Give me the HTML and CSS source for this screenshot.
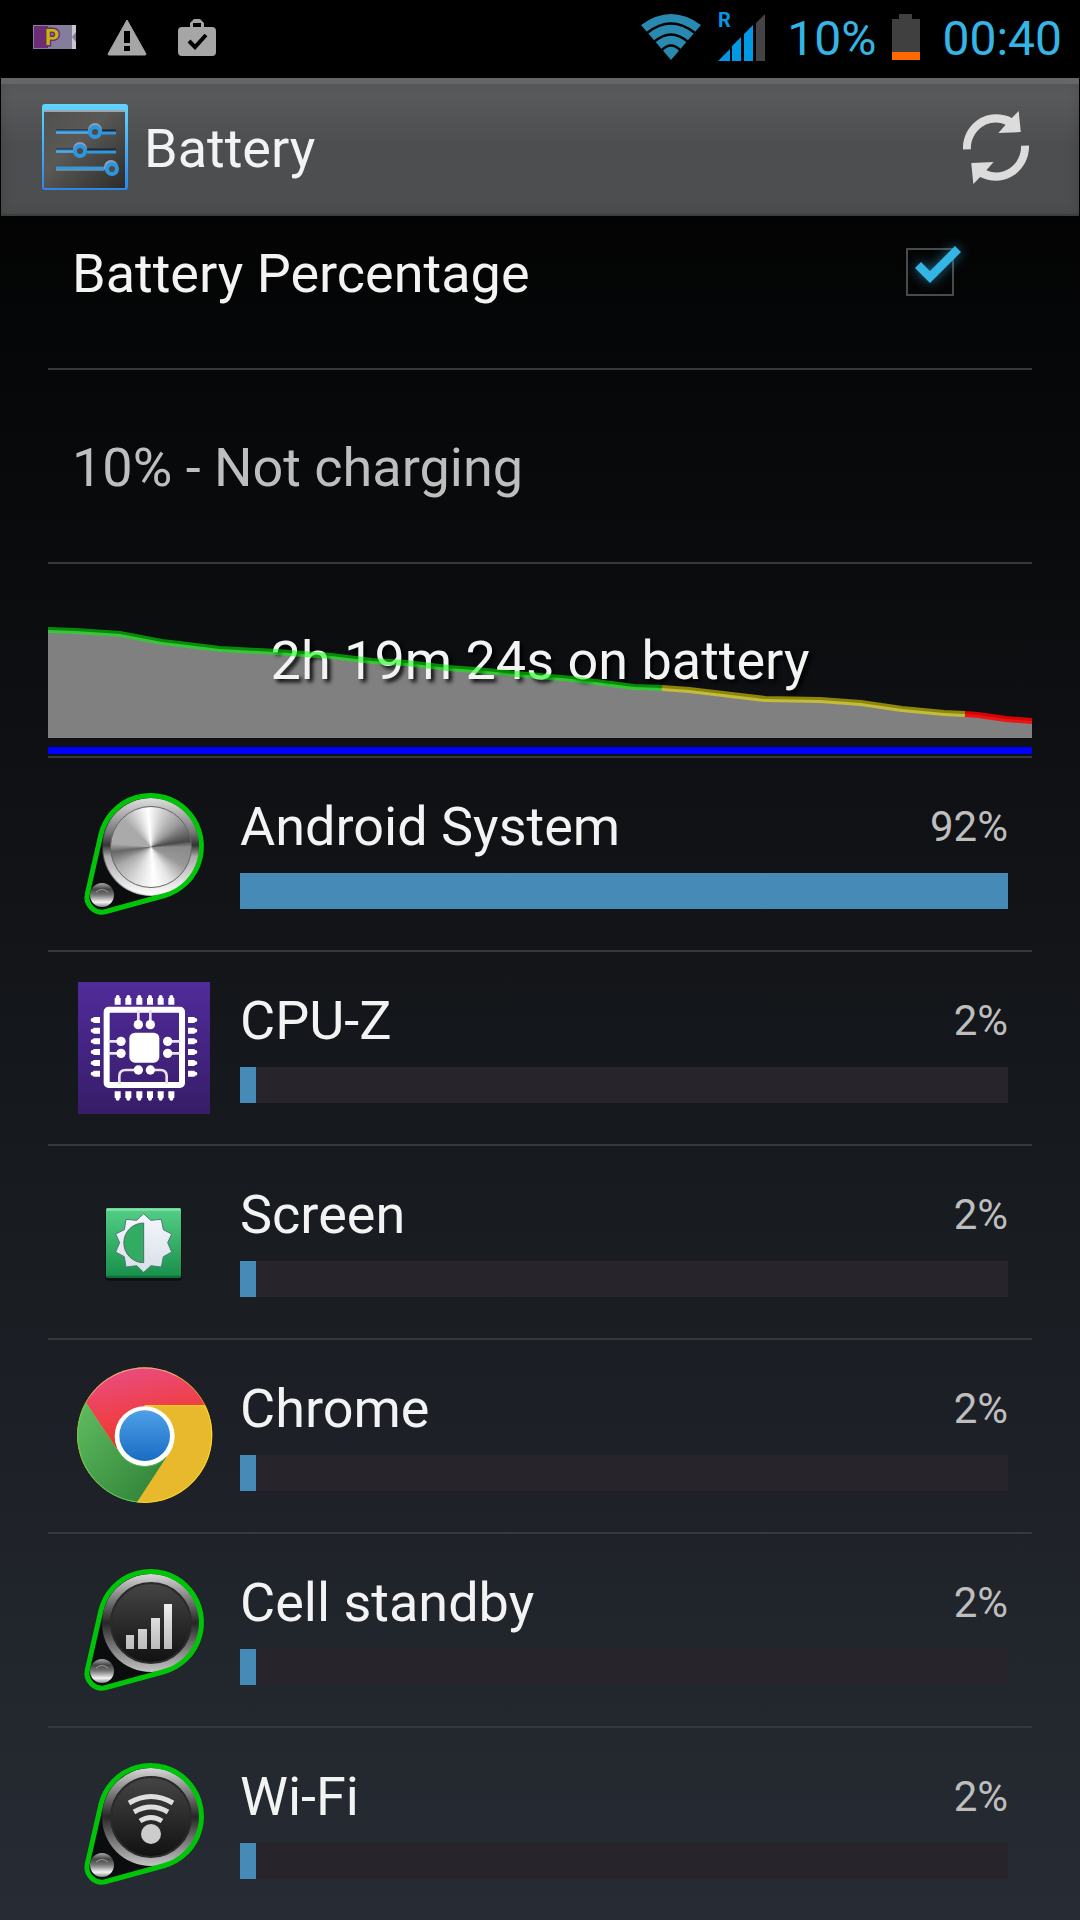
FILE: index.html
```html
<!DOCTYPE html>
<html lang="en">
<head>
    <meta charset="UTF-8">
    <meta name="viewport" content="width=device-width, initial-scale=1.0">
    <title>Battery</title>
    <link rel="stylesheet" href="styles.css">
</head>
<body>
    <!-- shared gradients and the knob body -->
    <svg class="defs" width="0" height="0" aria-hidden="true">
        <defs>
            <linearGradient id="ring" x1="0" y1="0" x2="0" y2="1">
                <stop offset="0" stop-color="#d8d8d8"/>
                <stop offset=".3" stop-color="#6c6c6c"/>
                <stop offset=".5" stop-color="#262626"/>
                <stop offset=".7" stop-color="#6a6a6a"/>
                <stop offset="1" stop-color="#c4c4c4"/>
            </linearGradient>
            <linearGradient id="screw" x1="0" y1="0" x2="0" y2="1">
                <stop offset="0" stop-color="#aaa"/>
                <stop offset=".25" stop-color="#444"/>
                <stop offset=".5" stop-color="#777"/>
                <stop offset=".8" stop-color="#f4f4f4"/>
                <stop offset="1" stop-color="#888"/>
            </linearGradient>
            <linearGradient id="dial" x1="0" y1="0" x2="0" y2="1">
                <stop offset="0" stop-color="#454545"/>
                <stop offset="1" stop-color="#111"/>
            </linearGradient>
            <linearGradient id="glyph" x1="0" y1="0" x2="0" y2="1">
                <stop offset="0" stop-color="#eee"/>
                <stop offset="1" stop-color="#bbb"/>
            </linearGradient>
        </defs>
        <symbol id="knob" viewBox="0 0 144 144">
            <path d="M29 52A51 51 0 1 1 92.500 113.500L34 129.500A15 15 0 0 1 15.400 111.500Z" fill="#0b0c0d"/>
            <circle cx="79" cy="65" r="49" fill="url(#ring)"/>
            <circle cx="30" cy="113" r="12" fill="url(#screw)"/>
            <path d="M24 110q6-5 12 0" fill="none" stroke="#999" stroke-width="1"/>
            <path d="M29 52A51 51 0 1 1 92.500 113.500L34 129.500A15 15 0 0 1 15.400 111.500Z" fill="none" stroke="#00c408" stroke-width="5"/>
        </symbol>
    </svg>

    <div class="statusbar">
        <svg width="43" height="24" viewBox="0 0 43 24">
            <rect width="43" height="24" fill="#847d9b"/>
            <rect x="1" y="1" width="14" height="22" fill="#6c2b75"/>
            <path d="M39 0h4v8l-3 4 3 4v8h-4z" fill="#c9c9c9"/>
            <path d="M43 7l-4 5 4 5z" fill="#847d9b"/>
            <text class="coupon" x="12" y="20">P</text>
        </svg>
        <svg width="40" height="37" viewBox="0 0 40 37">
            <path d="M20 1L39 35q0 1-1 1H2q-1 0-1-1z" fill="#a6a6a6" stroke="#a6a6a6" stroke-linejoin="round"/>
            <path d="M17 12h6v12h-6zM17 27h6v5h-6z" fill="#000"/>
        </svg>
        <svg width="38" height="37" viewBox="0 0 38 37">
            <path d="M4 8h8V4l4-4h6l4 4v4h8q4 0 4 4v21q0 4-4 4H4q-4 0-4-4V12q0-4 4-4zM15 4v4h8V4z" fill="#a6a6a6" fill-rule="evenodd"/>
            <path d="M11 22l6 6 11-12" fill="none" stroke="#000" stroke-width="4"/>
        </svg>
        <div class="system">
            <svg width="60" height="48" viewBox="0 0 60 48">
                <path d="M0 12Q30-10 60 12L30 47z" fill="#2989b0"/>
                <path d="M6 20Q30 1 54 20M13 29Q30 14 47 29M21 37Q30 28 39 37" fill="none" stroke="#000" stroke-width="2.500"/>
            </svg>
            <svg class="signal" width="50" height="50" viewBox="0 0 50 50">
                <path d="M1 49L13 37v12zM15 49V34l9-9v24zM27 49V22l9-9v36z" fill="#0099e5"/>
                <path d="M39 49V11l9-9v47z" fill="#444"/>
                <text x="1" y="15">R</text>
            </svg>
            <span>10%</span>
            <svg width="28" height="46" viewBox="0 0 28 46">
                <path d="M0 5h7V0h13v5h8v34H0z" fill="#404040"/>
                <path d="M0 38h28v8H0z" fill="#ff6900"/>
            </svg>
            <time>00:40</time>
        </div>
    </div>

    <header class="actionbar">
        <svg width="86" height="86" viewBox="0 0 86 86">
            <defs>
                <linearGradient id="frame" x1="0" y1="0" x2="0" y2="1">
                    <stop offset="0" stop-color="#62d4ff"/>
                    <stop offset="1" stop-color="#2b86ea"/>
                </linearGradient>
                <linearGradient id="plate" x1="0" y1="0" x2="1" y2="1">
                    <stop offset="0" stop-color="#505050"/>
                    <stop offset=".4" stop-color="#5a5955"/>
                    <stop offset="1" stop-color="#2c2c2a"/>
                </linearGradient>
            </defs>
            <rect width="86" height="86" rx="3" fill="url(#frame)"/>
            <rect x="2" y="7" width="81" height="77" fill="url(#plate)"/>
            <path d="M2 7h81" stroke="#9aa6b4" stroke-width="2"/>
            <path d="M14 27h60M14 46h60" stroke="#1b2936" stroke-width="3"/>
            <path d="M14 28h36M14 47h22M14 64h50M60 29h14M45 48h29" stroke="#3297dc" stroke-width="3"/>
            <path d="M14 29h34M14 48h20M14 66h48" stroke="#79b8e4"/>
            <g fill="#4c4b48" stroke="#8e9fbd" stroke-width="4">
                <circle cx="53" cy="26" r="5"/>
                <circle cx="38" cy="45" r="5"/>
                <circle cx="69" cy="63" r="5"/>
            </g>
            <g fill="#4c4b48" stroke="#2f95dd" stroke-width="4">
                <circle cx="53" cy="28" r="5"/>
                <circle cx="38" cy="47" r="5"/>
                <circle cx="70" cy="65" r="5"/>
            </g>
        </svg>
        <h1>Battery</h1>
        <button class="refresh" type="button" aria-label="Refresh">
            <svg width="66" height="73" viewBox="0 0 192 218" preserveAspectRatio="none">
                <path id="arrow" d="M0 115C-2 60 40 10 95 10Q122 10 142 21L162 0L168 63L103 66L124 41Q110 34 95 34C55 34 22 70 23 114Z" fill="#dcdcdc"/>
                <use href="#arrow" transform="rotate(180 96 109)"/>
            </svg>
        </button>
    </header>

    <main>
        <div class="row first">
            <label for="percentage">Battery Percentage</label>
            <div class="check">
                <input type="checkbox" id="percentage" checked>
                <svg width="48" height="40" viewBox="0 0 48 40">
                    <path d="M1 23l6-6 9 9L41 1l6 6L16 38z" fill="#33b5e5"/>
                </svg>
            </div>
        </div>
        <div class="row status">10% - Not charging</div>
        <div class="row chart">
            <svg viewBox="0 0 984 192" preserveAspectRatio="none">
                <path d="M0 66L28 67 72 70 114 78 131 80 172 85 228 88 283 92 324 97 358 99 400 104 427 106 469 110 524 115 586 123 614 124 641 126 675 130 717 135 772 136 813 139 854 145 896 149 917 150 930 151 958 155 984 157V174H0z" fill="#808080"/>
                <path d="M0 183h984v7H0z" fill="#00f"/>
            </svg>
            <p>2h 19m 24s on battery</p>
            <svg class="level" viewBox="0 0 984 192" preserveAspectRatio="none">
                <path d="M0 66L28 67 72 70 114 78 131 80 172 85 228 88 283 92 324 97 358 99 400 104 427 106 469 110 524 115 586 123 614 124" stroke="#00ff00" stroke-opacity=".53"/>
                <path d="M614 124L641 126 675 130 717 135 772 136 813 139 854 145 896 149 917 150" stroke="#fff000" stroke-opacity=".53"/>
                <path d="M917 150L930 151 958 155 984 157" stroke="#ff0000" stroke-opacity=".83"/>
            </svg>
        </div>

        <ul class="apps">
            <li class="row">
                <svg class="icon" viewBox="0 0 144 144">
                    <use href="#knob"/>
                    <foreignObject x="31" y="17" width="96" height="96">
                        <div class="rim"><div class="metal"></div></div>
                    </foreignObject>
                </svg>
                <div class="usage">
                    <div class="line"><h2>Android System</h2><span>92%</span></div>
                    <div class="bar"><div style="width: 100%"></div></div>
                </div>
            </li>
            <li class="row">
                <svg class="icon" viewBox="36 18 432 432">
                    <defs>
                        <linearGradient id="cpu" x1="0" y1="0" x2="0" y2="1">
                            <stop offset="0" stop-color="#502b9b"/>
                            <stop offset="1" stop-color="#371d68"/>
                        </linearGradient>
                    </defs>
                    <rect x="54" y="36" width="396" height="396" fill="url(#cpu)"/>
                    <rect x="140" y="119" width="226" height="226" rx="6" fill="none" stroke="#fff" stroke-width="18"/>
                    <rect x="208" y="188" width="90" height="90" rx="17" fill="#fff"/>
                    <!-- pins: square inner end, rounded outer end -->
                    <g fill="none" stroke="#fff" stroke-width="18">
                        <path d="M173 84v20M205 84v20M238 84v20M270 84v20M302 84v20M334 84v20"/>
                        <path d="M173 364v20M205 364v20M238 364v20M270 364v20M302 364v20M334 364v20"/>
                        <path d="M100 150h20M100 182h20M100 214h20M100 246h20M100 279h20M100 311h20"/>
                        <path d="M384 150h20M384 182h20M384 214h20M384 246h20M384 279h20M384 311h20"/>
                    </g>
                    <g fill="none" stroke="#fff" stroke-width="12" stroke-linecap="round">
                        <path d="M173 81v14M205 81v14M238 81v14M270 81v14M302 81v14M334 81v14"/>
                        <path d="M173 372v14M205 372v14M238 372v14M270 372v14M302 372v14M334 372v14"/>
                        <path d="M98 150h14M98 182h14M98 214h14M98 246h14M98 279h14M98 311h14"/>
                        <path d="M392 150h14M392 182h14M392 214h14M392 246h14M392 279h14M392 311h14"/>
                    </g>
                    <path d="M235 120v44M271 120v44M145 214h38M145 250h38M323 214h38M323 250h38M235 300h-38q-19 0-19 19v24M271 300h30q19 0 19 19v24" fill="none" stroke="#e8e2f2" stroke-width="8"/>
                    <g fill="#fff">
                        <circle cx="235" cy="164" r="14"/><circle cx="271" cy="164" r="14"/>
                        <circle cx="183" cy="214" r="14"/><circle cx="183" cy="250" r="14"/>
                        <circle cx="323" cy="214" r="14"/><circle cx="323" cy="250" r="14"/>
                        <circle cx="235" cy="300" r="14"/><circle cx="271" cy="300" r="14"/>
                    </g>
                </svg>
                <div class="usage">
                    <div class="line"><h2>CPU-Z</h2><span>2%</span></div>
                    <div class="bar"><div style="width: 2.1%"></div></div>
                </div>
            </li>
            <li class="row">
                <svg class="icon" viewBox="36 -30 432 432">
                    <defs>
                        <linearGradient id="green" x1="0" y1="0" x2="0" y2="1">
                            <stop offset="0" stop-color="#55cf88"/>
                            <stop offset="1" stop-color="#178f4a"/>
                        </linearGradient>
                        <linearGradient id="pale" x1="0" y1="0" x2="0" y2="1">
                            <stop offset="0" stop-color="#f6f7fc"/>
                            <stop offset="1" stop-color="#d9dfe8"/>
                        </linearGradient>
                    </defs>
                    <rect x="136" y="90" width="230" height="212" rx="8" fill="#0d1013"/>
                    <rect x="138" y="84" width="225" height="209" rx="5" fill="url(#green)"/>
                    <path d="M140 89h221" stroke="#86e0aa" stroke-width="7"/>
                    <path d="M139 290h223" stroke="#0c6c36" stroke-width="5"/>
                    <path d="M251 101L272 121L304 118L310 149L335 162L323 188L335 216L310 230L304 261L273 257L251 277L230 257L198 261L193 230L167 216L179 188L167 162L193 149L198 118L230 121Z" fill="url(#pale)" stroke="#4d7c77" stroke-width="3"/>
                    <path d="M251 129v119a59.500 59.500 0 0 1 0-119z" fill="#32ab63" stroke="#4d6f6b" stroke-width="3"/>
                </svg>
                <div class="usage">
                    <div class="line"><h2>Screen</h2><span>2%</span></div>
                    <div class="bar"><div style="width: 2.1%"></div></div>
                </div>
            </li>
            <li class="row">
                <svg class="icon" viewBox="36 42 432 432">
                    <defs>
                        <linearGradient id="red" x1=".3" y1="0" x2=".6" y2="1">
                            <stop offset="0" stop-color="#ea4c80"/>
                            <stop offset=".6" stop-color="#ef3e44"/>
                            <stop offset="1" stop-color="#e0391f"/>
                        </linearGradient>
                        <linearGradient id="leaf" x1="0" y1="0" x2="1" y2="1">
                            <stop offset="0" stop-color="#5fbd60"/>
                            <stop offset="1" stop-color="#2d7d35"/>
                        </linearGradient>
                        <linearGradient id="ball" x1="0" y1="0" x2="0" y2="1">
                            <stop offset="0" stop-color="#4fa0e8"/>
                            <stop offset="1" stop-color="#1a6cc4"/>
                        </linearGradient>
                    </defs>
                    <circle cx="254" cy="255" r="203" fill="#e8b92c"/>
                    <path d="M78 158A202 202 0 0 1 435 167H254L170 296z" fill="url(#red)"/>
                    <path d="M78 158A203 203 0 0 0 231 457L320 320L254 300L170 296z" fill="url(#leaf)"/>
                    <path d="M78 159A202 202 0 0 0 231 456" fill="none" stroke="#4fce57" stroke-width="3"/>
                    <path d="M231 456A202 202 0 0 0 435 167H254" fill="none" stroke="#ffdc22" stroke-width="3"/>
                    <path d="M90 138A202 202 0 0 1 350 78" fill="none" stroke="#f39ab4" stroke-width="2"/>
                    <circle cx="254" cy="259" r="90" fill="#fff"/>
                    <path d="M175 303A90 90 0 0 0 318 322" fill="none" stroke="#53b854" stroke-width="3"/>
                    <circle cx="254" cy="257" r="76" fill="url(#ball)"/>
                </svg>
                <div class="usage">
                    <div class="line"><h2>Chrome</h2><span>2%</span></div>
                    <div class="bar"><div style="width: 2.1%"></div></div>
                </div>
            </li>
            <li class="row">
                <svg class="icon" viewBox="0 0 144 144">
                    <use href="#knob"/>
                    <circle cx="79" cy="65" r="40" fill="url(#dial)" stroke="#2a2a2a" stroke-width="2"/>
                    <path d="M54 77h8v14h-8zM66 71h9v20h-9zM79 60h9v31h-9zM92 46h8v45h-8z" fill="url(#glyph)"/>
                </svg>
                <div class="usage">
                    <div class="line"><h2>Cell standby</h2><span>2%</span></div>
                    <div class="bar"><div style="width: 2.1%"></div></div>
                </div>
            </li>
            <li class="row">
                <svg class="icon" viewBox="0 0 144 144">
                    <use href="#knob"/>
                    <circle cx="79" cy="65" r="40" fill="url(#dial)" stroke="#2a2a2a" stroke-width="2"/>
                    <path d="M57 51Q79 38 101 51M62 60Q79 50 96 60M68 69Q79 62 90 69" fill="none" stroke="#dedede" stroke-width="5"/>
                    <circle cx="79" cy="82" r="10" fill="#ccc"/>
                </svg>
                <div class="usage">
                    <div class="line"><h2>Wi-Fi</h2><span>2%</span></div>
                    <div class="bar"><div style="width: 2.1%"></div></div>
                </div>
            </li>
        </ul>
    </main>
</body>
</html>
```
FILE: styles.css
```css
* {
    box-sizing: border-box;
}

body {
    margin: 0;
    min-height: 100vh;
    font-family: Roboto, "Noto Sans", sans-serif;
    font-size: 54px;
    line-height: 64px;
    color: #f3f3f3;
    background: linear-gradient(#000, #000 4%, #272c34);
}

h1, h2, p, ul {
    margin: 0;
    padding: 0;
    font-size: 54px;
    font-weight: 400;
}

svg {
    display: block;
    flex: none;
}

.defs {
    position: absolute;
}

/* Status bar */
.statusbar {
    display: flex;
    align-items: center;
    gap: 31px;
    height: 78px;
    padding: 0 18px 4px 33px;
    background: #000;
}

.coupon {
    font-size: 22px;
    font-weight: 700;
    fill: #c4b900;
    stroke: #6c2b75;
    stroke-width: 3px;
    paint-order: stroke;
}

.system {
    display: flex;
    align-items: center;
    gap: 16px;
    margin-left: auto;
    font-size: 48px;
    color: #33b5e5;
}

.system span {
    padding: 4px 0 0 4px;
}

.system time {
    padding: 4px 0 0 6px;
}

.signal {
    overflow: visible;
}

.signal text {
    font-size: 20px;
    font-weight: 700;
    fill: #0099e5;
}

/* Action bar */
.actionbar {
    display: flex;
    align-items: center;
    gap: 16px;
    height: 138px;
    margin: 0 1px;
    padding: 0 50px 4px 41px;
    border-top: 6px solid #656667;
    border-bottom: 2px solid #3c3d3e;
    background: linear-gradient(#5b5c5e, #4d4e50 45%, #4d4e50);
    box-shadow: inset 0 0 12px rgba(0, 0, 0, 0.15);
}

.actionbar h1 {
    padding-top: 4px;
}

.refresh {
    margin-left: auto;
    padding: 0;
    border: none;
    background: none;
    cursor: pointer;
}

/* Rows */
main {
    padding: 0 48px;
}

.row {
    display: flex;
    align-items: center;
    gap: 24px;
    height: 194px;
    padding: 0 24px;
    border-bottom: 2px solid #36383b;
}

.first {
    justify-content: space-between;
    height: 154px;
    padding-bottom: 40px;
}

.first label {
    padding-top: 4px;
}

.status {
    padding-top: 4px;
    color: #bebebe;
}

.check {
    position: relative;
    margin-right: 54px;
}

.check input {
    display: block;
    appearance: none;
    width: 48px;
    height: 48px;
    margin: 0;
    border: 2px solid #4a4a4a;
}

.check svg {
    position: absolute;
    top: -3px;
    left: 8px;
    pointer-events: none;
    filter: drop-shadow(0 0 6px rgba(51, 181, 229, 0.6));
}

.check input:not(:checked) + svg {
    display: none;
}

/* Discharge chart */
.chart {
    display: grid;
    padding: 0;
}

.chart > * {
    grid-area: 1 / 1;
}

.chart svg {
    width: 100%;
    height: 192px;
}

.chart p {
    padding-top: 2px;
    text-align: center;
    text-shadow: 3px 3px 4px #000;
}

.level path {
    fill: none;
    stroke-width: 6;
}

/* App usage */
.apps {
    list-style: none;
}

.apps .row:last-child {
    height: 192px;
    border: none;
}

.icon {
    width: 144px;
    height: 144px;
}

.usage {
    flex: 1;
}

.line {
    display: flex;
    justify-content: space-between;
    margin-bottom: 18px;
    line-height: 56px;
}

.line span {
    font-size: 42px;
    color: #bebebe;
}

.bar {
    height: 36px;
    background: #27242b;
}

.bar div {
    height: 100%;
    background: #468ab8;
}

.rim {
    width: 96px;
    height: 96px;
    padding: 7px;
    border-radius: 50%;
    background: linear-gradient(#ddd, #777 35%, #333 48%, #aaa 60%, #fff);
}

.metal {
    width: 82px;
    height: 82px;
    border: 1px solid #666;
    border-radius: 50%;
    background: conic-gradient(from -5deg, #fff, #ccc 25deg, #999 55deg, #484848 86deg, #8a8a8a 95deg, #999 125deg, #e4e4e4 155deg, #fff 180deg, #ddd 210deg, #aaa 245deg, #666 268deg, #aaa 280deg, #aaa 320deg, #fff);
}
```
